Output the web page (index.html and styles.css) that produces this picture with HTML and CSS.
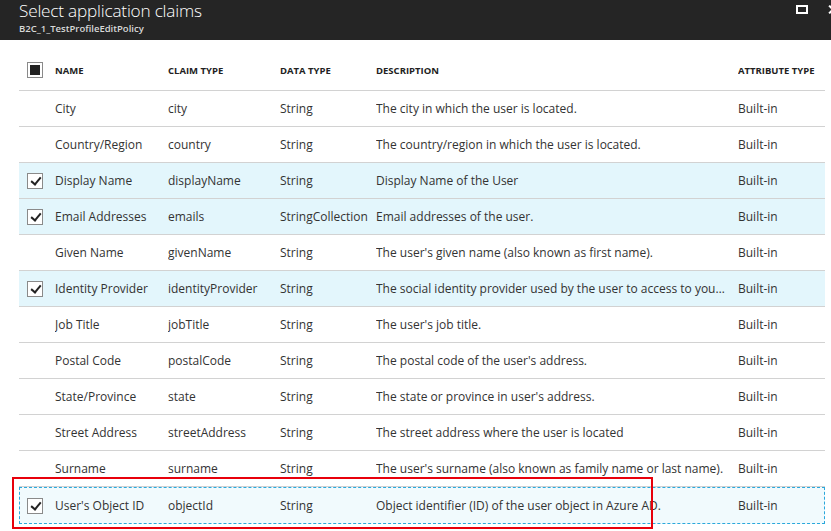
FILE: index.html
```html
<!DOCTYPE html>
<html>
<head>
<meta charset="utf-8">
<link rel="stylesheet" href="styles.css">
</head>
<body>
<div class="blade">
  <header class="topbar">
    <div class="titles">
      <div class="title">Select application claims</div>
      <div class="subtitle">B2C_1_TestProfileEditPolicy</div>
    </div>
    <div class="actions">
      <span class="max-icon"></span>
      <span class="close-icon"></span>
    </div>
  </header>
  <div class="table">
    <div class="row head">
      <div class="cell chk"><span class="box partial"><span></span></span></div>
      <div class="cell">NAME</div>
      <div class="cell">CLAIM TYPE</div>
      <div class="cell">DATA TYPE</div>
      <div class="cell">DESCRIPTION</div>
      <div class="cell">ATTRIBUTE TYPE</div>
    </div>
    <div class="row">
      <div class="cell chk"></div>
      <div class="cell">City</div><div class="cell">city</div><div class="cell">String</div>
      <div class="cell desc">The city in which the user is located.</div><div class="cell">Built-in</div>
    </div>
    <div class="row">
      <div class="cell chk"></div>
      <div class="cell">Country/Region</div><div class="cell">country</div><div class="cell">String</div>
      <div class="cell desc">The country/region in which the user is located.</div><div class="cell">Built-in</div>
    </div>
    <div class="row sel">
      <div class="cell chk"><span class="box checked"></span></div>
      <div class="cell">Display Name</div><div class="cell">displayName</div><div class="cell">String</div>
      <div class="cell desc">Display Name of the User</div><div class="cell">Built-in</div>
    </div>
    <div class="row sel">
      <div class="cell chk"><span class="box checked"></span></div>
      <div class="cell">Email Addresses</div><div class="cell">emails</div><div class="cell">StringCollection</div>
      <div class="cell desc">Email addresses of the user.</div><div class="cell">Built-in</div>
    </div>
    <div class="row">
      <div class="cell chk"></div>
      <div class="cell">Given Name</div><div class="cell">givenName</div><div class="cell">String</div>
      <div class="cell desc">The user's given name (also known as first name).</div><div class="cell">Built-in</div>
    </div>
    <div class="row sel">
      <div class="cell chk"><span class="box checked"></span></div>
      <div class="cell">Identity Provider</div><div class="cell">identityProvider</div><div class="cell">String</div>
      <div class="cell desc">The social identity provider used by the user to access to your application.</div><div class="cell">Built-in</div>
    </div>
    <div class="row">
      <div class="cell chk"></div>
      <div class="cell">Job Title</div><div class="cell">jobTitle</div><div class="cell">String</div>
      <div class="cell desc">The user's job title.</div><div class="cell">Built-in</div>
    </div>
    <div class="row">
      <div class="cell chk"></div>
      <div class="cell">Postal Code</div><div class="cell">postalCode</div><div class="cell">String</div>
      <div class="cell desc">The postal code of the user's address.</div><div class="cell">Built-in</div>
    </div>
    <div class="row">
      <div class="cell chk"></div>
      <div class="cell">State/Province</div><div class="cell">state</div><div class="cell">String</div>
      <div class="cell desc">The state or province in user's address.</div><div class="cell">Built-in</div>
    </div>
    <div class="row">
      <div class="cell chk"></div>
      <div class="cell">Street Address</div><div class="cell">streetAddress</div><div class="cell">String</div>
      <div class="cell desc">The street address where the user is located</div><div class="cell">Built-in</div>
    </div>
    <div class="row">
      <div class="cell chk"></div>
      <div class="cell">Surname</div><div class="cell">surname</div><div class="cell">String</div>
      <div class="cell desc">The user's surname (also known as family name or last name).</div><div class="cell">Built-in</div>
    </div>
    <div class="row focus">
      <div class="cell chk"><span class="box checked"></span></div>
      <div class="cell">User's Object ID</div><div class="cell">objectId</div><div class="cell">String</div>
      <div class="cell desc">Object identifier (ID) of the user object in Azure AD.</div><div class="cell">Built-in</div>
    </div>
  </div>
  <div class="highlight"></div>
</div>
</body>
</html>
```
FILE: styles.css
```css
html, body {
  margin: 0;
  padding: 0;
  background: #ffffff;
  overflow: hidden;
}
body {
  width: 831px;
  height: 531px;
  font-family: "Open Sans", "Noto Sans", sans-serif;
  color: #333333;
}
.blade {
  position: relative;
  width: 831px;
  height: 531px;
}
.topbar {
  height: 40px;
  background: #252525;
  display: flex;
  justify-content: space-between;
  align-items: flex-start;
  padding-left: 19px;
  box-sizing: border-box;
}
.title {
  color: #ffffff;
  font-size: 17.2px;
  font-weight: 300;
  line-height: 22px;
  padding-top: 0;
  letter-spacing: -0.2px;
}
.subtitle {
  color: #d8d8d8;
  font-size: 9.5px;
  font-weight: 600;
  line-height: 12px;
  margin-top: 1px;
}
.actions {
  display: flex;
  align-items: flex-start;
  padding-top: 5px;
  gap: 20px;
  margin-right: -6px;
}
.max-icon {
  display: block;
  width: 8px;
  height: 5px;
  border: 2px solid #ffffff;
}
.close-icon {
  display: block;
  width: 9px;
  height: 9px;
  position: relative;
}
.close-icon::before, .close-icon::after {
  content: "";
  position: absolute;
  left: 4px;
  top: -1px;
  width: 2px;
  height: 11px;
  background: #ffffff;
  transform: rotate(45deg);
}
.close-icon::after {
  transform: rotate(-45deg);
}
.table {
  margin-left: 19px;
  width: 806px;
}
.row {
  display: grid;
  grid-template-columns: 36px 113px 112px 96px 362px 1fr;
  height: 36px;
  border-bottom: 1px solid #d2d2d2;
  box-sizing: border-box;
  align-items: center;
  font-size: 12px;
}
.row.head {
  height: 51px;
  padding-top: 10px;
  font-size: 9.5px;
  font-weight: 700;
  color: #222222;
}
.cell {
  white-space: nowrap;
  overflow: hidden;
  padding-right: 8px;
}
.cell.desc {
  text-overflow: ellipsis;
  padding-right: 12px;
}
.chk {
  display: flex;
  align-items: center;
  padding-left: 8px;
  padding-right: 0;
}
.row.sel {
  background: #e3f6fc;
}
.row.focus {
  background: #f1fafd;
  border: 1px dashed #2aa8dc;
  height: 37px;
  grid-template-columns: 35px 113px 112px 96px 362px 1fr;
}
.row.focus .chk {
  padding-left: 7px;
}
.box {
  display: block;
  width: 16px;
  height: 16px;
  border: 1px solid #8a8a8a;
  box-sizing: border-box;
  background: #ffffff;
  position: relative;
}
.box.partial span {
  position: absolute;
  left: 2px;
  top: 2px;
  width: 10px;
  height: 10px;
  background: #222222;
}
.box.checked::after {
  content: "";
  position: absolute;
  left: 5px;
  top: 1px;
  width: 4px;
  height: 8px;
  border-right: 2px solid #222222;
  border-bottom: 2px solid #222222;
  transform: rotate(40deg);
}
.highlight {
  position: absolute;
  left: 12px;
  top: 477px;
  width: 641px;
  height: 52px;
  border: 2px solid #e8000b;
  box-sizing: border-box;
  pointer-events: none;
}
```
